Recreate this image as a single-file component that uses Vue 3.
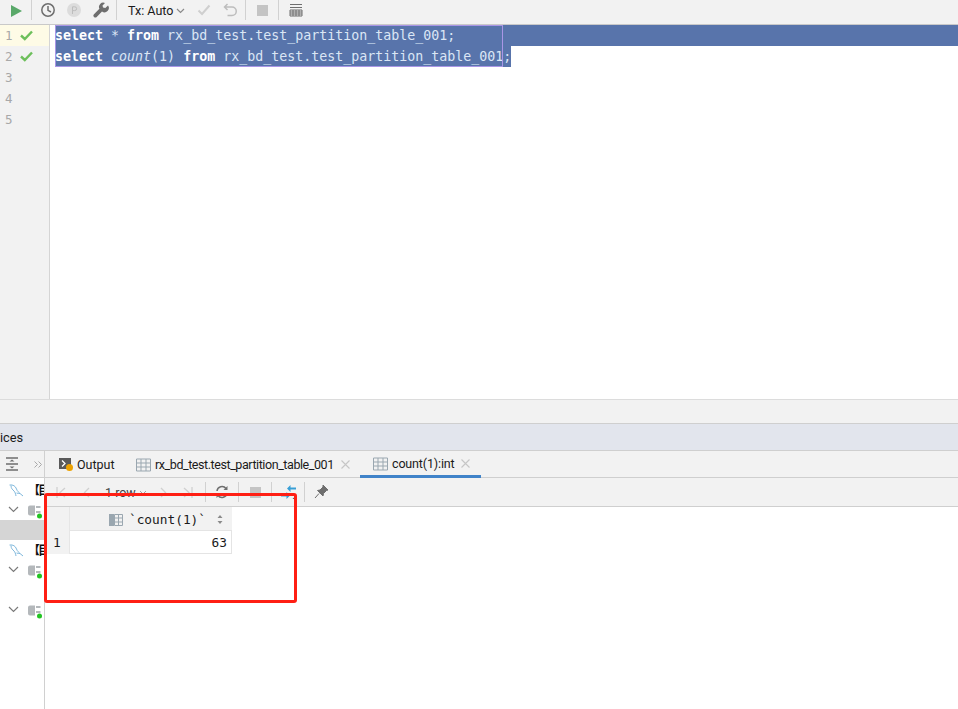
<script setup>
const tree = ['db', 'conn', 'sel', 'db', 'conn', 'blank', 'conn']
const lines = [1, 2, 3, 4, 5]
</script>

<template>
  <div class="app">
    <header class="toolbar">
      <svg class="ic first" width="14" height="16" viewBox="0 0 14 16"><path d="M2 2 L13 8 L2 14 Z" fill="#59a869"/></svg>
      <i class="sep s1"></i>
      <svg class="ic i-clock" width="16" height="16" viewBox="0 0 16 16"><circle cx="8" cy="8" r="6.2" fill="none" stroke="#6e6e6e" stroke-width="1.5"/><path d="M8 4v4.4l3 1.6" fill="none" stroke="#6e6e6e" stroke-width="1.5"/></svg>
      <svg class="ic i-p" width="14" height="14" viewBox="0 0 14 14"><circle cx="7" cy="7" r="7" fill="#dcdcdc"/><path d="M5.5 11V3.800h2.200a1.800 1.800 0 0 1 0 3.800H5.500" fill="none" stroke="#bdbdbd" stroke-width="1"/></svg>
      <svg class="ic i-wrench" width="16" height="16" viewBox="0 0 16 16"><path d="M15 3.500 12.300 6 10 5.500 9.500 3.500 12 1A4.300 4.300 0 0 0 6.400 6.800L1 12.200a1.900 1.900 0 0 0 2.700 2.700L9 9.500A4.300 4.300 0 0 0 15 3.500Z" fill="#6e6e6e"/></svg>
      <i class="sep s2"></i>
      <span class="tx">Tx: Auto</span>
      <svg class="ic i-chev" width="9" height="6" viewBox="0 0 9 6"><path d="M1 1l3.500 3.500L8 1" fill="none" stroke="#8a8a8a" stroke-width="1.200"/></svg>
      <svg class="ic i-check" width="14" height="12" viewBox="0 0 14 12"><path d="M1.500 6.500 5 10 12.500 1.500" fill="none" stroke="#cfcfcf" stroke-width="2"/></svg>
      <svg class="ic i-undo" width="14" height="14" viewBox="0 0 14 14"><path d="M4.500 1 1.500 4l3 3M2 4h7a3.800 3.800 0 0 1 0 8.500H4.500" fill="none" stroke="#bdbdbd" stroke-width="1.500"/></svg>
      <i class="sep s3"></i>
      <i class="stop i-stop"></i>
      <i class="sep s4"></i>
      <svg class="ic i-table" width="14" height="14" viewBox="0 0 14 14"><path d="M1 1.500h12M1 4.500h12" stroke="#6e6e6e" stroke-width="1.200"/><path d="M1 7h12v6H1zM1 9h12M1 11h12M4 7v6M7 7v6M10 7v6" fill="none" stroke="#6e6e6e" stroke-width="1"/></svg>
    </header>

    <section class="editor">
      <div class="gutter">
        <div v-for="n in lines" :key="n" class="gline" :class="{ current: n === 1 }">
          <span class="num">{{ n }}</span>
          <svg v-if="n < 3" width="13" height="11" viewBox="0 0 13 11"><path d="M1 5.500 4.800 9 12 1.500" fill="none" stroke="#6dbf5b" stroke-width="2.400"/></svg>
        </div>
      </div>
      <div class="code">
        <div class="line l1"><b>select</b> * <b>from</b> rx_bd_test.test_partition_table_001;</div>
        <div class="line l2"><b>select</b> <em>count</em>(1) <b>from</b> rx_bd_test.test_partition_table_001;</div>
        <div class="purple"></div>
      </div>
    </section>

    <div class="spacer"></div>
    <div class="services-title">ices</div>

    <section class="services">
      <aside class="side">
        <div class="side-head">
          <svg width="12" height="14" viewBox="0 0 12 14"><path d="M0 1h12M0 13h12M0 7h12" stroke="#6e6e6e" stroke-width="1.500" /><path d="M3.500 4.500 6 2.500l2.500 2zM3.500 9.500 6 11.500l2.500-2z" fill="#6e6e6e"/></svg>
          <svg class="more" width="8" height="7" viewBox="0 0 8 7"><path d="M.5.500l3 3-3 3M4.500.500l3 3-3 3" fill="none" stroke="#a8a8a8"/></svg>
        </div>
        <div class="tree">
          <div v-for="(row, i) in tree" :key="i" class="row" :class="row">
            <template v-if="row === 'db'">
              <svg class="dolphin" width="15" height="14" viewBox="0 0 15 14"><path d="M.5 1C4 .5 6.500 2 7.500 5c.7 2.200 2.500 3.500 3.500 4.500l3 2.500M2 1.500c0 3 1.500 4 3 5.500 1 1 1.500 2.500 2 5M7.500 9c1.500.5 2.500.5 3.500.5" fill="none" stroke="#7fb8dc" stroke-width="1"/></svg>
              <span class="dbname">【目</span>
            </template>
            <template v-if="row === 'conn'">
              <svg class="chev" width="11" height="7" viewBox="0 0 11 7"><path d="M1 1l4.500 4.500L10 1" fill="none" stroke="#7a7a7a" stroke-width="1.200"/></svg>
              <svg class="plug" width="15" height="15" viewBox="0 0 15 15"><path d="M3 1.500h5v10H3A2 2 0 0 1 1 9.500v-6a2 2 0 0 1 2-2Z" fill="#b4b8bb"/><path d="M9 3h4.500M9 8h4.500" stroke="#b4b8bb" stroke-width="2"/><circle cx="12.500" cy="12" r="2.500" fill="#22c422"/></svg>
            </template>
          </div>
        </div>
      </aside>

      <main class="results">
        <nav class="tabs">
          <div class="tab t-output">
            <svg width="15" height="15" viewBox="0 0 15 15"><rect y="1" width="12" height="11" fill="#5a5a5a"/><path d="M3 3.500 6 6.500 3 9.500" fill="none" stroke="#fff" stroke-width="1.300"/><circle cx="10.500" cy="10.500" r="3.500" fill="#eda200"/></svg>
            <span>Output</span>
          </div>
          <div class="tab t-first">
            <svg width="15" height="14" viewBox="0 0 15 14"><path d="M.5 1h14v12H.5zM.5 5h14M.5 9h14M5 1v12M10 1v12" fill="#f2f2f2" stroke="#9aa7b0"/></svg>
            <span class="long">rx_bd_test.test_partition_table_001</span>
            <svg class="close" width="9" height="9" viewBox="0 0 9 9"><path d="M.5.500l8 8M8.500.500l-8 8" stroke="#c6c6c6" stroke-width="1.100"/></svg>
          </div>
          <div class="tab t-active">
            <svg width="15" height="14" viewBox="0 0 15 14"><path d="M.5 1h14v12H.5zM.5 5h14M.5 9h14M5 1v12M10 1v12" fill="#f2f2f2" stroke="#9aa7b0"/></svg>
            <span class="short">count(1):int</span>
            <svg class="close" width="9" height="9" viewBox="0 0 9 9"><path d="M.5.500l8 8M8.500.500l-8 8" stroke="#c6c6c6" stroke-width="1.100"/></svg>
          </div>
        </nav>

        <div class="gridbar">
          <svg class="b1" width="10" height="11" viewBox="0 0 10 11"><path d="M1 0v11M9 1 4 5.500 9 10" fill="none" stroke="#d0d0d0" stroke-width="1.300"/></svg>
          <svg class="b2" width="7" height="11" viewBox="0 0 7 11"><path d="M6 1 1.500 5.500 6 10" fill="none" stroke="#d0d0d0" stroke-width="1.300"/></svg>
          <span class="rows">1 row</span>
          <svg class="b3" width="8" height="5" viewBox="0 0 8 5"><path d="M1 1l3 3 3-3" fill="none" stroke="#a0a0a0"/></svg>
          <svg class="b4" width="7" height="11" viewBox="0 0 7 11"><path d="M1 1l4.500 4.500L1 10" fill="none" stroke="#d0d0d0" stroke-width="1.300"/></svg>
          <svg class="b5" width="10" height="11" viewBox="0 0 10 11"><path d="M9 0v11M1 1l5 4.500L1 10" fill="none" stroke="#d0d0d0" stroke-width="1.300"/></svg>
          <i class="sep g1"></i>
          <svg class="b6" width="14" height="14" viewBox="0 0 14 14"><path d="M2 6a5 5 0 0 1 9-2.500M12 8a5 5 0 0 1-9 2.500" fill="none" stroke="#6e6e6e" stroke-width="1.500"/><path d="M12.500 1v4h-4zM1.500 13V9h4z" fill="#6e6e6e"/></svg>
          <i class="sep g2"></i>
          <i class="stop b7"></i>
          <i class="sep g3"></i>
          <svg class="b8" width="15" height="16" viewBox="0 0 15 16"><path d="M9 4.500h6M0 11.500h6" stroke="#389fd6" stroke-width="1.800"/><path d="M9.500 1v7L6 4.500zM5.500 8v7l3.500-3.500z" fill="#389fd6"/><path d="M11.500 15l3-3v3z" fill="#555"/></svg>
          <i class="sep g4"></i>
          <svg class="b9" width="15" height="15" viewBox="0 0 15 15"><path d="M9 1l5 5-1.500.500-3 3-.500 2.500-5.500-5.500L6 6l3-3zM5 9.500 1 14" fill="#6e6e6e" stroke="#6e6e6e"/></svg>
        </div>

        <div class="datagrid">
          <div class="corner"></div>
          <div class="colhead">
            <svg width="14" height="12" viewBox="0 0 14 12"><rect width="5" height="12" fill="#9aa7b0"/><path d="M5.500.500h8v11h-8zM5.500 4h8M5.500 8h8M9.500.500v11" fill="none" stroke="#9aa7b0"/></svg>
            <span class="colname">`count(1)`</span>
            <svg class="sort" width="6" height="9" viewBox="0 0 6 9"><path d="M3 0l2.500 3h-5zM3 9 .500 6h5z" fill="#8a8a8a"/></svg>
          </div>
          <div class="rownum">1</div>
          <div class="cell">63</div>
        </div>
      </main>

      <div class="redbox"></div>
    </section>
  </div>
</template>

<style>
html, body { margin: 0; padding: 0; background: #fff; overflow: hidden; }
</style>

<style scoped>
.app { width: 958px; height: 709px; display: flex; flex-direction: column; overflow: hidden; font-family: Roboto, "Noto Sans", sans-serif; font-size: 12px; color: #1a1a1a; }
.toolbar { position: relative; height: 25px; box-sizing: border-box; flex: none; background: #f2f2f2; border-bottom: 1px solid #c9c9c9; }
.toolbar > * { position: absolute; }
.sep { width: 1px; background: #d1d1d1; display: block; position: absolute; }
.stop { display: block; position: absolute; width: 11px; height: 11px; background: #c4c4c4; }
.first { left: 9px; top: 3px; }
.s1 { left: 31px; top: 0; height: 20px; }
.i-clock { left: 40px; top: 2px; }
.i-p { left: 67px; top: 3px; }
.i-wrench { left: 93px; top: 2px; }
.s2 { left: 116px; top: 0; height: 20px; }
.tx { left: 128px; top: 3px; line-height: 16px; font-size: 12.500px; }
.i-chev { left: 176px; top: 8px; }
.i-check { left: 197px; top: 4px; }
.i-undo { left: 223px; top: 3px; }
.s3 { left: 245px; top: 0; height: 20px; }
.i-stop { left: 257px; top: 5px; }
.s4 { left: 278px; top: 0; height: 20px; }
.i-table { left: 289px; top: 3px; }

.editor { height: 375px; box-sizing: border-box; flex: none; display: flex; background: #fff; border-bottom: 1px solid #dcdcdc; }
.gutter { width: 50px; box-sizing: border-box; flex: none; background: #f2f2f2; border-right: 1px solid #d5d5d5; }
.gline { height: 21px; display: flex; align-items: center; gap: 7px; padding-left: 5px; }
.gline.current { background: #fefbe6; }
.num { font-family: "DejaVu Sans Mono", monospace; font-size: 12.500px; color: #a8a8a8; width: 8px; }
.code { position: relative; flex: 1; padding-left: 5px; font-family: "DejaVu Sans Mono", monospace; font-size: 13.300px; color: #dbe6f5; }
.line { height: 21px; line-height: 21px; white-space: pre; background: #5874ab; }
.line b { color: #fff; font-weight: 700; }
.line em { font-style: italic; }
.l2 { width: 456px; }
.purple { position: absolute; left: 5px; top: 0; width: 446px; height: 40px; border: 1px solid #a996e6; }

.spacer { height: 24px; box-sizing: border-box; flex: none; background: #f2f2f2; border-bottom: 1px solid #cfcfcf; }
.services-title { height: 27px; box-sizing: border-box; line-height: 27px; flex: none; background: #e2e5ed; border-bottom: 1px solid #cfcfcf; font-size: 12.800px; }
.services { position: relative; flex: 1; display: flex; min-height: 0; }

.side { width: 45px; box-sizing: border-box; flex: none; border-right: 1px solid #d0d0d0; }
.side-head { height: 27px; box-sizing: border-box; background: #f2f2f2; border-bottom: 1px solid #cfcfcf; display: flex; align-items: center; padding-left: 6px; gap: 16px; }
.tree { padding-top: 2px; }
.row { height: 20px; position: relative; overflow: hidden; }
.row.sel { background: #d5d5d5; }
.dolphin { position: absolute; left: 9px; top: 4px; }
.dbname { position: absolute; left: 28px; top: 0; font-family: "Noto Sans CJK SC", sans-serif; font-weight: 700; font-size: 12px; line-height: 20px; letter-spacing: -2px; white-space: nowrap; color: #111; }
.chev { position: absolute; left: 8px; top: 6px; }
.plug { position: absolute; left: 27px; top: 4px; }

.results { flex: 1; min-width: 0; }
.tabs { height: 27px; box-sizing: border-box; display: flex; background: #f2f2f2; border-bottom: 1px solid #cfcfcf; }
.tab { display: flex; align-items: center; gap: 4px; height: 27px; box-sizing: border-box; white-space: nowrap; font-size: 12.500px; }
.tab svg { flex: none; }
.t-output { padding-left: 14px; width: 91px; gap: 3px; }
.t-first { width: 224px; }
.t-active { padding-left: 13px; width: 121px; border-bottom: 3px solid #4083c9; padding-top: 1px; }
.long { letter-spacing: -0.430px; }
.short { letter-spacing: -0.150px; }
.close { margin-left: 3px; }

.gridbar { position: relative; height: 29px; box-sizing: border-box; background: #f2f2f2; border-bottom: 1px solid #cfcfcf; }
.gridbar > * { position: absolute; }
.b1 { left: 11px; top: 9px; }
.b2 { left: 38px; top: 9px; }
.rows { left: 60px; top: 7px; line-height: 16px; font-size: 12.500px; color: #444; }
.b3 { left: 94px; top: 12px; }
.b4 { left: 115px; top: 9px; }
.b5 { left: 138px; top: 9px; }
.g1 { left: 160px; top: 4px; height: 20px; }
.b6 { left: 170px; top: 7px; }
.g2 { left: 193px; top: 4px; height: 20px; }
.b7 { left: 205px; top: 9px; }
.g3 { left: 226px; top: 4px; height: 20px; }
.b8 { left: 236px; top: 6px; }
.g4 { left: 259px; top: 4px; height: 20px; }
.b9 { left: 269px; top: 6px; }

.datagrid { display: grid; grid-template-columns: 25px 162px; grid-template-rows: 24px 23px; width: 187px; font-family: "DejaVu Sans Mono", monospace; font-size: 12.800px; }
.corner { background: #f2f2f2; border-right: 1px solid #e6e6e6; }
.colhead { background: #f2f2f2; border-bottom: 1px solid #e4e4e4; box-sizing: border-box; display: flex; align-items: center; justify-content: flex-end; padding: 2px 9px 0 0; gap: 6px; }
.sort { margin-left: 5px; }
.rownum { background: #f2f2f2; border-right: 1px solid #e6e6e6; padding-left: 8px; line-height: 24px; }
.cell { text-align: right; padding-right: 4px; line-height: 24px; border-bottom: 1px solid #e4e4e4; border-right: 1px solid #e4e4e4; }
.redbox { position: absolute; left: 44px; top: 42px; width: 247px; height: 104px; border: 3px solid #ff1f14; border-radius: 3px; }
</style>
